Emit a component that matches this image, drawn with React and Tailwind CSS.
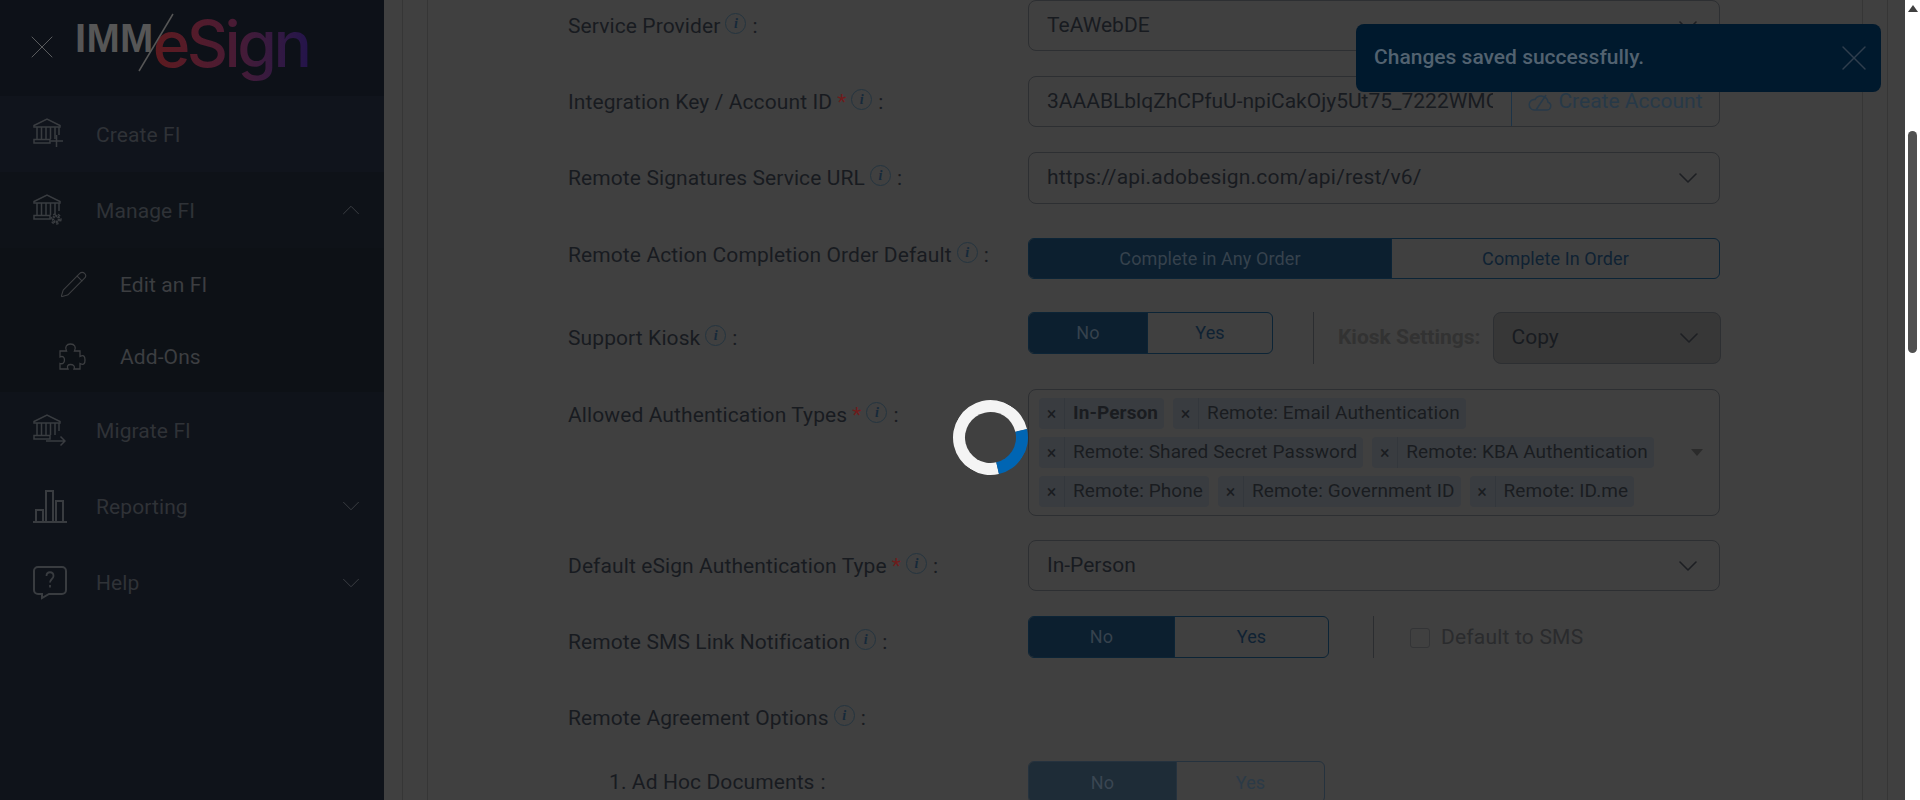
import React from "react";
import { ChevronDown, ChevronUp, Pencil, X } from "lucide-react";

const Bank = ({ children }) => (
  <svg width="34" height="36" viewBox="0 0 34 36" fill="none" stroke="#393c40" strokeWidth="1.5" className="shrink-0">
    <path d="M2 9.500 15 3l13 6.500v1.500H2z" />
    <path d="M5 11v12M9.500 11v12M14 11v12M18.500 11v12M23 11v12M27 11v8" />
    <path d="M2 23.500h16v3.500H2z" />
    {children}
  </svg>
);

const CreateIcon = () => (
  <Bank>
    <path d="M24.500 19v12M18.500 25h12.500" />
  </Bank>
);

const ManageIcon = () => (
  <Bank>
    <circle cx="24" cy="27" r="3" strokeWidth="2.500" strokeDasharray="2 0.600" />
    <circle cx="24" cy="27" r="5" strokeWidth="1.500" strokeDasharray="2.500 2.500" />
  </Bank>
);

const MigrateIcon = () => (
  <Bank>
    <path d="M14 29h19M28.500 24.500 33 29l-4.500 4.500" />
  </Bank>
);

const ChartIcon = () => (
  <svg width="36" height="36" viewBox="0 0 36 36" fill="none" stroke="#393c40" strokeWidth="2" className="shrink-0">
    <path d="M1 34h34M4 34V22h7v12M14 34V3h7v31M24 34V13h7v21" />
  </svg>
);

const HelpIcon = () => (
  <svg width="36" height="36" viewBox="0 0 36 36" fill="none" stroke="#393c40" strokeWidth="2" className="shrink-0">
    <path d="M6 2h24a4 4 0 0 1 4 4v19a4 4 0 0 1-4 4H17l-7 4v-4H6a4 4 0 0 1-4-4V6a4 4 0 0 1 4-4z" />
    <path d="M14.500 11c0-5 7-5 7 0 0 3-3.500 3-3.500 6.500M18 20v2.500" strokeWidth="1.800" />
  </svg>
);

const PuzzleIcon = () => (
  <svg width="27" height="27" viewBox="0 0 27 27" fill="none" stroke="#3c3e41" strokeWidth="1.300" className="shrink-0">
    <path d="M1 8h6.500c-2-4 0-7 4-7s6 3 4 7H21v5.500c4-2 5 0 5 3.500s-1 5.500-5 3.500V26h-6c1.500-3-1-4.500-3.500-4.500S7.500 23 9 26H1v-5.500c3 1 4.500-1 4.500-3.500S4 12.500 1 14z" />
  </svg>
);

const NavRow = ({ icon, label, chevron, sub, className }) => (
  <div className={`flex items-center ${sub ? "pl-[59px]" : "pl-[32px]"} pr-[18px] ${className}`}>
    <span className={`${sub ? "w-[61px]" : "w-[64px]"} flex`}>{icon}</span>
    <span className={`flex-1 pt-[3px] text-[21px] tracking-[0.1px] ${sub ? "text-[#3c3e41]" : "text-[#2f3237]"}`}>{label}</span>
    {chevron === "up" && <ChevronUp size={30} strokeWidth={0.8} color="#3a3d42" />}
    {chevron === "down" && <ChevronDown size={30} strokeWidth={0.8} color="#3a3d42" />}
  </div>
);

const Sidebar = () => (
  <aside className="w-[384px] shrink-0 h-full bg-[#0f131a]">
    <div className="h-[96px] bg-[#0d1118] flex items-start pl-[22px]">
      <X size={40} strokeWidth={0.6} color="#5a5c5e" className="mt-[27px]" />
      <div className="relative ml-[12px] mt-[12px] flex items-start">
        <span className="ml-[1px] mt-[6px] font-['Liberation_Sans'] font-bold text-[40px] leading-none text-[#565656] tracking-[0.3px]">IMM</span>
        <span className="-ml-[1px] font-['Inter'] font-medium text-[64px] leading-[64px] pb-[18px] tracking-[-3.500px] bg-gradient-to-r from-[#5e1a1e] via-[#4a1b33] to-[#24144a] bg-clip-text text-transparent">
          eSign
        </span>
        <svg width="36" height="60" viewBox="0 0 36 60" className="absolute left-[64px] top-[1px]">
          <path d="M35 1 1 58" stroke="#565656" strokeWidth="1.500" />
        </svg>
      </div>
    </div>
    <NavRow icon={<CreateIcon />} label="Create FI" className="h-[76px] bg-[#10141c]" />
    <NavRow icon={<ManageIcon />} label="Manage FI" chevron="up" className="h-[76px] bg-[#0e1218]" />
    <NavRow sub icon={<Pencil size={29} strokeWidth={0.9} color="#3c3e41" />} label="Edit an FI" className="h-[72px] bg-[#0d1116]" />
    <NavRow sub icon={<PuzzleIcon />} label="Add-Ons" className="h-[72px] bg-[#0d1116]" />
    <NavRow icon={<MigrateIcon />} label="Migrate FI" className="h-[76px]" />
    <NavRow icon={<ChartIcon />} label="Reporting" chevron="down" className="h-[76px]" />
    <NavRow icon={<HelpIcon />} label="Help" chevron="down" className="h-[77px]" />
  </aside>
);

const Info = () => (
  <span className="inline-flex items-center justify-center w-[21px] h-[21px] rounded-full border border-[#24343f] ml-[5px] mb-[6px] text-[#16293a] font-['Liberation_Serif'] italic font-bold text-[14px] leading-none">
    i
  </span>
);

const Label = ({ text, required, noInfo, className = "" }) => (
  <div className={`w-[460px] shrink-0 h-[51px] pt-[2px] flex items-center text-[21px] text-[#181b20] tracking-[0.1px] ${className}`}>
    <span>{text}</span>
    {required && <span className="text-[#6e1c1c] ml-[5px]">*</span>}
    {!noInfo && <Info />}
    <span className="ml-[6px]">:</span>
  </div>
);

const Select = ({ value, disabled, className = "" }) => (
  <div
    className={`flex items-center justify-between h-full rounded-[8px] border border-[#2d2f32] pl-[18px] pr-[15px] text-[21px] text-[#181b20] ${
      disabled ? "bg-[#373737]" : ""
    } ${className}`}
  >
    <span>{value}</span>
    <ChevronDown size={32} strokeWidth={1.2} color="#1d1f23" />
  </div>
);

const Toggle = ({ left, right, split, className = "", labelClass = "", faded }) => (
  <div className={`flex rounded-[6px] border ${faded ? "border-[#25323e]" : "border-[#0c2436]"} overflow-hidden text-[18px] tracking-[0.1px] ${className}`}>
    <div
      style={{ width: split }}
      className={`flex items-center justify-center ${labelClass} ${faded ? "bg-[#1e2c37] text-[#3a4652]" : "bg-[#0c1f2f] text-[#36424d]"}`}
    >
      {left}
    </div>
    <div className={`flex-1 flex items-center justify-center border-l ${labelClass} ${faded ? "text-[#2b3a47] border-[#25323e]" : "text-[#0f2233] border-[#0c2436]"}`}>
      {right}
    </div>
  </div>
);

const Tag = ({ text, bold }) => (
  <span className="inline-flex h-[31px] items-center rounded-[4px] bg-[#393c40] text-[19px] tracking-[0.1px] text-[#1a1c20]">
    <span className="w-[26px] border-r border-[#33373c] h-full flex items-center justify-center text-[18px]">×</span>
    <span className={`pl-[8px] pr-[6px] ${bold ? "font-bold" : ""}`}>{text}</span>
  </span>
);

const Form = () => (
  <div className="pl-[140px]">
    <div className="flex h-[51px] mb-[25px]">
      <Label text="Service Provider" />
      <Select value="TeAWebDE" className="w-[692px]" />
    </div>
    <div className="flex h-[51px] mb-[25px]">
      <Label text="Integration Key / Account ID" required />
      <div className="w-[692px] flex rounded-[8px] border border-[#2d2f32] text-[21px] text-[#181b20] overflow-hidden">
        <div className="w-[482px] pl-[18px] pr-[18px] flex items-center">
          <div className="overflow-hidden whitespace-nowrap">3AAABLblqZhCPfuU-npiCakOjy5Ut75_7222WMC8fQ</div>
        </div>
        <div className="flex-1 flex items-center justify-center gap-[6px] border-l border-[#1c3347] text-[#273948] whitespace-nowrap">
          <svg width="24" height="20" viewBox="0 0 24 20" fill="none" stroke="#273948" strokeWidth="1.500" className="shrink-0">
            <path d="M6 18h13a4 4 0 0 0 1-7.800 7 7 0 0 0-13-2.700A5 5 0 0 0 6 18zM8 18 18 3" />
          </svg>
          Create Account
        </div>
      </div>
    </div>
    <div className="flex h-[52px] mb-[34px]">
      <Label text="Remote Signatures Service URL" />
      <Select value="https://api.adobesign.com/api/rest/v6/" className="w-[692px] tracking-[0.2px]" />
    </div>
    <div className="flex h-[41px] mb-[33px]">
      <Label text="Remote Action Completion Order Default" className="-mt-[9px]" />
      <Toggle left="Complete in Any Order" right="Complete In Order" split={362} className="w-[692px]" />
    </div>
    <div className="flex h-[52px] mb-[25px]">
      <Label text="Support Kiosk" />
      <Toggle left="No" right="Yes" split={118} labelClass="pb-[2px]" className="w-[245px] h-[42px]" />
      <div className="w-px h-full bg-[#2b2d30] ml-[40px]" />
      <span className="ml-[24px] mr-[12px] self-center text-[21px] font-bold text-[#323232] whitespace-nowrap">Kiosk Settings:</span>
      <Select value="Copy" disabled className="w-[228px]" />
    </div>
    <div className="flex h-[127px] mb-[24px]">
      <Label text="Allowed Authentication Types" required />
      <div className="w-[692px] relative rounded-[8px] border border-[#2d2f32] pl-[10px] pt-[8px] flex flex-col gap-[8px]">
        <div className="flex gap-[9px]">
          <Tag text="In-Person" bold />
          <Tag text="Remote: Email Authentication" />
        </div>
        <div className="flex gap-[9px]">
          <Tag text="Remote: Shared Secret Password" />
          <Tag text="Remote: KBA Authentication" />
        </div>
        <div className="flex gap-[9px]">
          <Tag text="Remote: Phone" />
          <Tag text="Remote: Government ID" />
          <Tag text="Remote: ID.me" />
        </div>
        <span className="absolute right-[16px] top-[59px] w-0 h-0 border-x-[6px] border-x-transparent border-t-[7px] border-t-[#2b2b2b]" />
      </div>
    </div>
    <div className="flex h-[51px] mb-[25px]">
      <Label text="Default eSign Authentication Type" required />
      <Select value="In-Person" className="w-[692px]" />
    </div>
    <div className="flex h-[42px] mb-[34px]">
      <Label text="Remote SMS Link Notification" />
      <Toggle left="No" right="Yes" split={145} labelClass="pb-[2px]" className="w-[301px]" />
      <div className="w-px h-full bg-[#2b2d30] ml-[44px]" />
      <div className="ml-[36px] mt-[2px] self-center flex items-center gap-[11px] text-[21px] tracking-[0.2px] text-[#2a2b2d]">
        <span className="w-[20px] h-[20px] border border-[#333436] rounded-[3px]" />
        Default to SMS
      </div>
    </div>
    <div className="flex h-[51px] mb-[18px]">
      <Label text="Remote Agreement Options" />
    </div>
    <div className="flex h-[42px]">
      <Label text="1. Ad Hoc Documents" noInfo className="pl-[41px] -mt-[5px]" />
      <Toggle left="No" right="Yes" split={147} faded className="w-[297px]" />
    </div>
  </div>
);

export default function App() {
  return (
    <div className="h-[800px] w-full flex overflow-hidden bg-[#404040] font-['Roboto',sans-serif] relative">
      <Sidebar />
      <main className="flex-1 h-full overflow-hidden">
        <div className="ml-[18px] mr-[17px] h-full border-x border-[#363636] pl-[24px] pr-[24px]">
          <div className="h-full border-x border-[#363636]">
            <Form />
          </div>
        </div>
      </main>
      {/* scrollbar */}
      <div className="w-[15px] shrink-0 h-full bg-white flex flex-col items-center pt-[5px]">
        <span className="w-0 h-0 border-x-[5px] border-x-transparent border-b-[7px] border-b-[#404040]" />
        <span className="mt-[119px] w-[9px] h-[222px] rounded-full bg-[#505050]" />
      </div>
      {/* toast */}
      <div className="absolute left-[1356px] top-[24px] w-[525px] h-[68px] rounded-[8px] bg-[#00192d] flex items-center justify-between pl-[18px] pr-[5px]">
        <span className="text-[21px] font-medium text-[#526270]">Changes saved successfully.</span>
        <X size={44} strokeWidth={0.8} color="#2f3e4d" />
      </div>
      {/* spinner */}
      <div className="absolute left-[953px] top-[400px] w-[75px] h-[75px] rounded-full border-[12px] border-[#f4f4f4] border-r-[#0065b3] rotate-[32deg]" />
    </div>
  );
}
